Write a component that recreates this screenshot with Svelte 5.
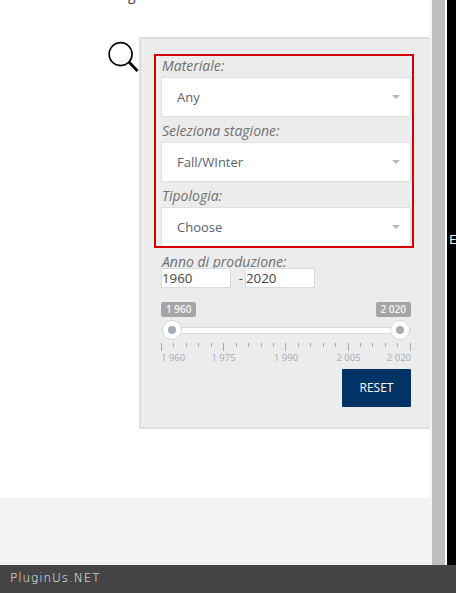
<script>
  const selects = [
    { label: "Materiale:", value: "Any" },
    { label: "Seleziona stagione:", value: "Fall/WInter" },
    { label: "Tipologia:", value: "Choose" }
  ]
  const ticks = Array.from({ length: 21 }, (_, i) => i)
  const grid = [
    { text: "1 960", pos: 0, cls: "first" },
    { text: "1 975", pos: 25, cls: "" },
    { text: "1 990", pos: 50, cls: "" },
    { text: "2 005", pos: 75, cls: "" },
    { text: "2 020", pos: 100, cls: "last" }
  ]
</script>

<div class="page">
  <div class="columns">
    <main>
      <div class="content">
        <div class="clipped"><span>g</span></div>
        <div class="filter-row">
          <svg class="search" width="32" height="34" viewBox="0 0 32 34">
            <circle cx="13" cy="13" r="11.8" fill="none" stroke="#000" stroke-width="1.7" />
            <path d="M21.5 21 L30.5 30.5" stroke="#000" stroke-width="3" fill="none" />
          </svg>
          <aside class="panel">
            <div class="red-box">
              {#each selects as s}
                <div class="label">{s.label}</div>
                <div class="select">
                  <span>{s.value}</span>
                  <i class="caret"></i>
                </div>
              {/each}
            </div>

            <div class="year">
              <div class="label">Anno di produzione:</div>
              <div class="year-inputs">
                <input type="text" value="1960" />
                <span class="dash">-</span>
                <input type="text" value="2020" />
              </div>
            </div>

            <div class="slider">
              <div class="badges">
                <span class="badge">1 960</span>
                <span class="badge">2 020</span>
              </div>
              <div class="track">
                <div class="bar"></div>
                <span class="handle left"></span>
                <span class="handle right"></span>
              </div>
              <div class="ticks">
                {#each ticks as t}
                  <span class="tick" class:major={t % 5 === 0}></span>
                {/each}
              </div>
              <div class="grid-labels">
                {#each grid as g}
                  <span class={g.cls} style="left: {g.pos}%">{g.text}</span>
                {/each}
              </div>
            </div>

            <div class="actions">
              <button>RESET</button>
            </div>
          </aside>
        </div>
      </div>
      <div class="gray-band"></div>
    </main>
    <div class="scrollbar"></div>
    <div class="white-gap"></div>
    <div class="black">
      <span class="sliver">E</span>
    </div>
  </div>
  <footer>PluginUs.NET</footer>
</div>

<style>
  :global(body) {
    margin: 0;
    background: #fff;
  }
  .page {
    width: 456px;
    height: 593px;
    display: flex;
    flex-direction: column;
    overflow: hidden;
    font-family: "Open Sans", sans-serif;
  }
  .columns {
    flex: 1;
    display: flex;
    min-height: 0;
  }
  main {
    width: 432px;
    display: flex;
    flex-direction: column;
  }
  .content {
    height: 498px;
    background: #fff;
    border-right: 2px solid #f4f4f4;
    box-sizing: border-box;
  }
  .clipped {
    height: 5px;
    overflow: hidden;
    padding-left: 128px;
    font-size: 14px;
    line-height: 14px;
    color: #444;
  }
  .clipped span {
    display: block;
    margin-top: -12px;
  }
  .filter-row {
    display: flex;
    align-items: flex-start;
    padding: 32px 0 0 108px;
  }
  .search {
    margin-top: 4px;
    flex: none;
    width: 31px;
  }
  .panel {
    width: 291px;
    height: 392px;
    box-sizing: border-box;
    background: #ececec;
    border: 2px solid #dedede;
    border-right: none;
    padding: 15px 0 0 13px;
  }
  .red-box {
    width: 260px;
    height: 194px;
    box-sizing: border-box;
    border: 2px solid #d40000;
    padding: 0 1px 0 5px;
    overflow: hidden;
  }
  .label {
    font-size: 14px;
    font-style: italic;
    color: #707070;
    margin-left: 1px;
  }
  .red-box .label {
    height: 21px;
    line-height: 20px;
    margin-top: 4px;
  }
  .red-box .label:first-child {
    margin-top: 0;
  }
  .select {
    height: 40px;
    box-sizing: border-box;
    background: #fff;
    border: 1px solid #dddfe2;
    display: flex;
    align-items: center;
    justify-content: space-between;
    padding: 0 10px 0 15px;
    font-size: 13px;
    color: #5a6072;
  }
  .caret {
    width: 0;
    height: 0;
    border-left: 4.5px solid transparent;
    border-right: 4.5px solid transparent;
    border-top: 4.5px solid #b5b8c0;
  }
  .year {
    margin: 4px 0 0 7px;
  }
  .year .label {
    height: 16px;
    line-height: 19px;
  }
  .year-inputs {
    display: flex;
    align-items: center;
  }
  .year-inputs input {
    width: 70px;
    height: 20px;
    box-sizing: border-box;
    border: 1px solid #d8dbe0;
    background: #fff;
    padding: 0 1px 0 0;
    font-family: "Open Sans", sans-serif;
    font-size: 13.33px;
    color: #444;
    outline: none;
  }
  .dash {
    width: 14px;
    text-align: right;
    padding-right: 2px;
    box-sizing: border-box;
    font-size: 13px;
    color: #555;
  }
  .slider {
    margin: 14px 0 0 7px;
    width: 250px;
  }
  .badges {
    display: flex;
    justify-content: space-between;
  }
  .badge {
    height: 15px;
    line-height: 15px;
    padding: 0 5px;
    border-radius: 2px;
    background: #a5a5a5;
    color: #f4f4f4;
    font-size: 10px;
    font-weight: 600;
  }
  .track {
    position: relative;
    height: 24px;
    margin-top: 1px;
    display: flex;
    align-items: center;
  }
  .bar {
    width: 100%;
    height: 7px;
    box-sizing: border-box;
    background: #fff;
    border: 1px solid #d6d8dc;
    border-radius: 4px;
  }
  .handle {
    position: absolute;
    top: 2px;
    width: 20px;
    height: 20px;
    box-sizing: border-box;
    border-radius: 50%;
    background: #fff;
    border: 1px solid #d6d8dc;
    display: block;
  }
  .handle::after {
    content: "";
    position: absolute;
    left: 5px;
    top: 5px;
    width: 8px;
    height: 8px;
    border-radius: 50%;
    background: #a4abb4;
  }
  .handle.left {
    left: 1px;
  }
  .handle.right {
    right: 1px;
  }
  .ticks {
    display: flex;
    justify-content: space-between;
    align-items: flex-start;
    margin-top: 1px;
    height: 8px;
  }
  .tick {
    width: 1px;
    height: 4px;
    background: #a4abb4;
  }
  .tick.major {
    height: 8px;
  }
  .grid-labels {
    position: relative;
    height: 14px;
    font-size: 9.5px;
    line-height: 14px;
    color: #a4abb4;
  }
  .grid-labels span {
    position: absolute;
    top: 0;
    transform: translateX(-50%);
    white-space: nowrap;
  }
  .grid-labels .first {
    transform: none;
  }
  .grid-labels .last {
    transform: translateX(-100%);
  }
  .actions {
    display: flex;
    justify-content: flex-end;
    width: 257px;
    margin-top: 4px;
  }
  button {
    width: 69px;
    height: 38px;
    border: none;
    border-radius: 1px;
    background: #003366;
    color: #fff;
    font-family: "Open Sans", sans-serif;
    font-size: 12px;
    padding: 0 0 2px;
  }
  .gray-band {
    flex: 1;
    background: #f4f4f4;
  }
  .scrollbar {
    width: 13px;
    background: #bfbfbf;
  }
  .white-gap {
    width: 2px;
    background: #fff;
  }
  .black {
    flex: 1;
    background: #000;
    overflow: hidden;
    position: relative;
  }
  .sliver {
    position: absolute;
    left: 2px;
    top: 232px;
    color: #e8f4ff;
    font-family: "DejaVu Sans Mono", monospace;
    font-size: 13px;
    line-height: 16px;
  }
  footer {
    height: 28px;
    flex: none;
    background: #444;
    color: #f2f2f2;
    font-family: "DejaVu Sans", sans-serif;
    font-weight: 200;
    font-size: 12px;
    letter-spacing: 0.95px;
    line-height: 27px;
    padding-left: 10px;
  }
</style>
